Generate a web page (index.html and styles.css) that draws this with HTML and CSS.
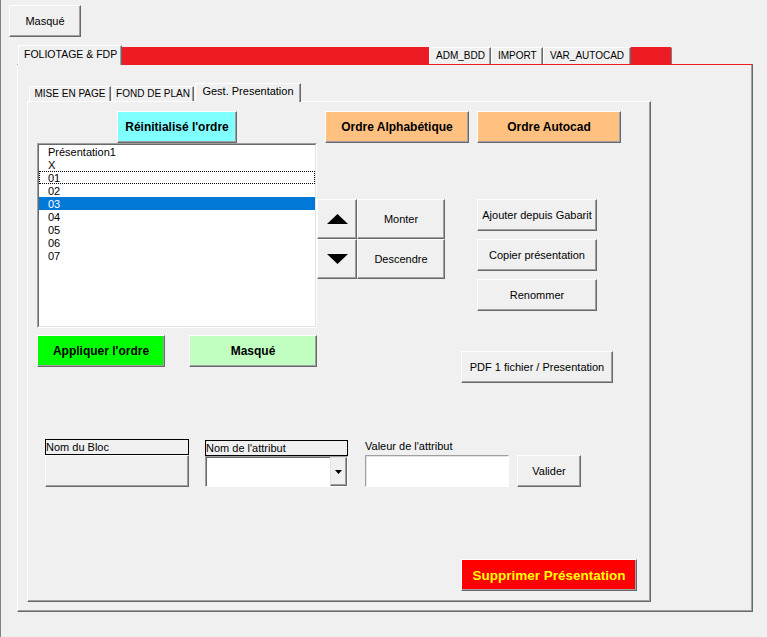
FILE: index.html
```html
<!DOCTYPE html>
<html lang="fr">
<head>
<meta charset="UTF-8">
<meta name="viewport" content="width=device-width, initial-scale=1.0">
<link rel="stylesheet" href="styles.css">
</head>
<body>
<div class="window">
    <button class="btn top-btn">Masqué</button>

    <div class="outer">
        <!-- main page tabs -->
        <div class="strip outer-strip">
            <div class="tab tab-active tab-folio">FOLIOTAGE &amp; FDP</div>
            <div class="tab tab-red tab-red-wide"></div>
            <div class="tab tab-adm">ADM_BDD</div>
            <div class="tab tab-import">IMPORT</div>
            <div class="tab tab-var">VAR_AUTOCAD</div>
            <div class="tab tab-red tab-red-end"></div>
        </div>

        <div class="panel outer-panel">
            <!-- sub tabs of FOLIOTAGE -->
            <div class="strip inner-strip">
                <div class="tab tab-mise">MISE EN PAGE</div>
                <div class="tab tab-fond">FOND DE PLAN</div>
                <div class="tab tab-active tab-gest">Gest. Presentation</div>
            </div>

            <div class="panel inner-panel">
                <div class="top">
                    <div class="left-col">
                        <button class="btn bold cyan reset">Réinitialisé l'ordre</button>
                        <div class="listbox">
                            <div class="list-inner">
                                <div class="item">Présentation1</div>
                                <div class="item">X</div>
                                <div class="item focus">01</div>
                                <div class="item">02</div>
                                <div class="item selected">03</div>
                                <div class="item">04</div>
                                <div class="item">05</div>
                                <div class="item">06</div>
                                <div class="item">07</div>
                            </div>
                        </div>
                    </div>

                    <div class="right-col">
                        <div class="sort-row">
                            <button class="btn bold orange sort">Ordre Alphabétique</button>
                            <button class="btn bold orange sort">Ordre Autocad</button>
                        </div>
                        <div class="move-row">
                            <div class="arrows">
                                <button class="btn arrow">
                                    <svg width="21" height="10" viewBox="0 0 21 10"><polygon points="0,10 10.5,0 21,10" fill="#000"/></svg>
                                </button>
                                <button class="btn move">Monter</button>
                                <button class="btn arrow">
                                    <svg width="21" height="10" viewBox="0 0 21 10"><polygon points="0,0 21,0 10.5,10" fill="#000"/></svg>
                                </button>
                                <button class="btn move">Descendre</button>
                            </div>
                            <div class="actions">
                                <button class="btn action">Ajouter depuis Gabarit</button>
                                <button class="btn action">Copier présentation</button>
                                <button class="btn action">Renommer</button>
                            </div>
                        </div>
                    </div>
                </div>

                <div class="mid">
                    <button class="btn bold green apply">Appliquer l'ordre</button>
                    <button class="btn bold pale hide">Masqué</button>
                    <button class="btn pdf">PDF 1 fichier / Presentation</button>
                </div>

                <div class="fields">
                    <div class="field f-bloc">
                        <div class="field-label boxed">Nom du Bloc</div>
                        <div class="bloc-value"></div>
                    </div>
                    <div class="field f-attr">
                        <div class="field-label boxed">Nom de l'attribut</div>
                        <div class="combo">
                            <div class="combo-text"></div>
                            <div class="combo-btn">
                                <svg width="7" height="4" viewBox="0 0 7 4"><polygon points="0,0 7,0 3.5,4" fill="#000"/></svg>
                            </div>
                        </div>
                    </div>
                    <div class="field f-val">
                        <div class="field-label">Valeur de l'attribut</div>
                        <div class="textbox"></div>
                    </div>
                    <button class="btn valider">Valider</button>
                </div>

                <button class="btn bold danger">Supprimer Présentation</button>
            </div>
        </div>
    </div>
</div>
</body>
</html>
```

FILE: styles.css
```css
body {
    margin: 0;
    background: #f0f0f0;
    font-family: "Liberation Sans", Arial, sans-serif;
    font-size: 11px;
    color: #000;
}
.window {
    box-sizing: border-box;
    height: 637px;
    border-left: 1px solid #7f7f7f;
    padding-top: 5px;
    overflow: hidden;
}

/* raised 3D buttons */
.btn {
    box-sizing: border-box;
    display: flex;
    align-items: center;
    justify-content: center;
    height: 32px;
    padding: 0;
    border: 1px solid;
    border-color: #fff #696969 #696969 #fff;
    box-shadow: inset -1px -1px #a0a0a0;
    background: #f0f0f0;
    font-family: "Liberation Sans", Arial, sans-serif;
    font-size: 11px;
    color: #000;
    white-space: nowrap;
}
.bold {
    font-weight: bold;
    font-size: 12px;
}
.cyan { background: #80ffff; }
.orange { background: #ffc080; }
.green { background: #00ff00; }
.pale { background: #c0ffc0; }
.danger {
    background: #ff0000;
    color: #ffff00;
    font-size: 13.5px;
}

.top-btn {
    width: 72px;
    margin-left: 8px;
}

/* tab strips */
.outer {
    margin: 8px 0 0 16px;
}
.strip {
    display: flex;
    align-items: flex-end;
}
.tab {
    box-sizing: border-box;
    border-top: 1px solid #fff;
    border-left: 1px solid #fff;
    border-right: 1px solid #696969;
    box-shadow: inset -1px 0 #a0a0a0;
    background: #f0f0f0;
    font-size: 10px;
    white-space: nowrap;
    padding-left: 5px;
}
.tab-active {
    position: relative;
    margin-bottom: -1px;
}
.tab-red {
    background: #ed1c24;
    border-color: #ed1c24;
    box-shadow: none;
}

.outer-strip {
    margin-left: 1px;
}
.outer-strip .tab {
    height: 17px;
    line-height: 15px;
}
.outer-strip .tab-active {
    height: 20px;
    line-height: 17px;
    font-size: 10.5px;
}
.tab-folio { width: 104px; }
.tab-red-wide { width: 307px; border-right: none; }
.tab-adm { width: 62px; padding-left: 6px; }
.tab-import { width: 52px; padding-left: 6px; }
.tab-var { width: 88px; padding-left: 6px; }
.tab-red-end {
    width: 41px;
    border-right: 1px solid #808080;
    border-top-right-radius: 2px;
}

.inner-strip {
    margin: 18px 0 0 11px;
    gap: 1px;
}
.inner-strip .tab {
    height: 15px;
    line-height: 14px;
    padding-left: 0;
    text-align: center;
}
.inner-strip .tab-active {
    height: 19px;
    line-height: 15px;
    font-size: 11px;
}
.tab-mise { width: 82px; }
.tab-fond { width: 82px; }
.tab-gest { width: 106px; }

/* tab panels */
.panel {
    box-sizing: border-box;
    border-top: 1px solid #fff;
    border-left: 1px solid #fff;
    border-right: 1px solid #696969;
    border-bottom: 1px solid #696969;
    box-shadow: inset -1px -1px #a0a0a0;
}
.outer-panel {
    width: 736px;
    height: 548px;
    border-top-color: #ed1c24;
}
.inner-panel {
    width: 624px;
    height: 501px;
    margin-left: 9px;
}

/* list + ordering buttons */
.top {
    display: flex;
    margin-top: 9px;
}
.left-col {
    width: 280px;
    margin-left: 9px;
}
.reset {
    width: 120px;
    margin-left: 80px;
}
.listbox {
    box-sizing: border-box;
    height: 185px;
    border: 1px solid;
    border-color: #a0a0a0 #fff #fff #a0a0a0;
}
.list-inner {
    box-sizing: border-box;
    height: 100%;
    border: 1px solid;
    border-color: #696969 #e3e3e3 #e3e3e3 #696969;
    background: #fff;
}
.item {
    height: 13px;
    line-height: 14px;
    padding-left: 9px;
}
.item.focus {
    outline: 1px dotted #000;
    outline-offset: -1px;
}
.item.selected {
    background: #0078d7;
    color: #fff;
}

.sort-row {
    display: flex;
    gap: 8px;
    margin-left: 8px;
}
.sort { width: 144px; }
.move-row {
    display: flex;
    margin-top: 56px;
}
.arrows {
    display: grid;
    grid-template-columns: 40px 88px;
    grid-template-rows: 40px 40px;
}
.arrows .btn { height: 40px; }
.actions {
    display: flex;
    flex-direction: column;
    gap: 8px;
    margin-left: 32px;
}
.action { width: 120px; }

/* apply / hide / pdf */
.mid {
    display: flex;
    align-items: flex-start;
    margin-top: 7px;
    margin-left: 9px;
}
.apply { width: 128px; }
.hide { width: 128px; margin-left: 24px; }
.pdf {
    width: 152px;
    margin: 16px 0 0 144px;
}

/* attribute editing */
.fields {
    display: flex;
    align-items: flex-end;
    margin-top: 56px;
}
.field { width: 144px; }
.f-bloc { margin-left: 17px; }
.f-attr { margin-left: 16px; width: 143px; }
.f-val { margin-left: 17px; }
.field-label {
    box-sizing: border-box;
    height: 16px;
    line-height: 15px;
    white-space: nowrap;
}
.field-label.boxed {
    border: 1px solid #000;
    line-height: 14px;
}
.bloc-value {
    box-sizing: border-box;
    height: 32px;
    border: 1px solid;
    border-color: #fff #696969 #696969 #fff;
    box-shadow: inset -1px -1px #a0a0a0;
}
.combo {
    box-sizing: border-box;
    display: flex;
    height: 31px;
    border: 1px solid;
    border-color: #a0a0a0 #fff #fff #a0a0a0;
    background: #fff;
}
.combo-text {
    flex: 1;
    border-top: 1px solid #696969;
    border-left: 1px solid #696969;
}
.combo-btn {
    box-sizing: border-box;
    width: 17px;
    display: flex;
    align-items: center;
    justify-content: center;
    background: #f0f0f0;
    border: 1px solid;
    border-color: #e3e3e3 #696969 #696969 #e3e3e3;
    box-shadow: inset -1px -1px #a0a0a0;
}
.textbox {
    box-sizing: border-box;
    height: 32px;
    border: 1px solid;
    border-color: #a0a0a0 #fff #fff #a0a0a0;
    box-shadow: inset 1px 1px #e3e3e3;
    background: #fff;
}
.valider {
    width: 64px;
    margin-left: 8px;
}

.danger {
    width: 176px;
    margin: 72px 0 0 433px;
}
```
